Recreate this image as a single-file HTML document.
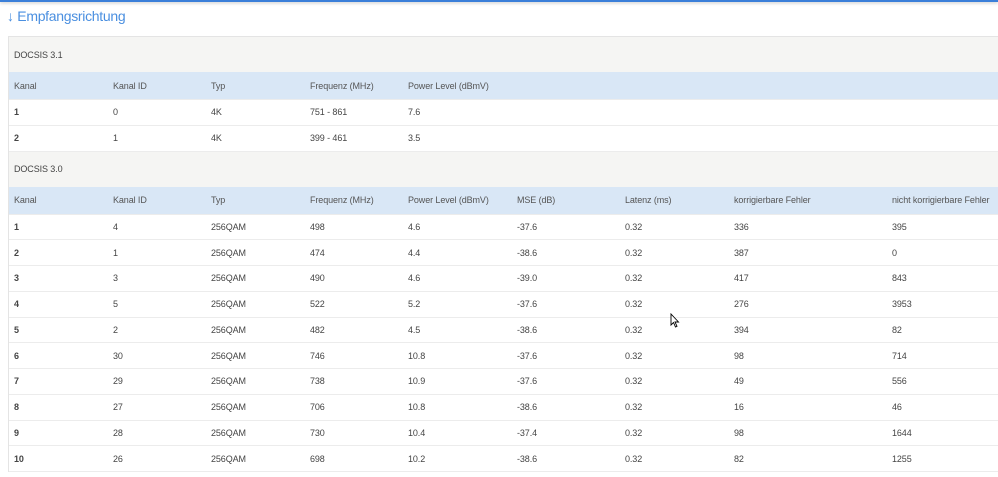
<!DOCTYPE html>
<html><head><style>
body{margin:0;width:998px;height:477px;overflow:hidden;background:#fff;font-family:"Liberation Sans",sans-serif;color:#444;position:relative}
.top{position:absolute;left:0;top:0;width:998px;height:2px;background:#3b7fd9;box-shadow:0 1px 3px rgba(0,0,0,.25)}
.title{position:absolute;left:7px;top:8px;font-size:14px;color:#4a8fe0;letter-spacing:-0.3px}
.wrap{position:absolute;left:8px;top:36px;width:990px;border-left:1px solid #e4e4e4;border-top:1px solid #e4e4e4}
.row{position:relative;height:25.75px;border-bottom:1px solid #ececec;font-size:9px;box-sizing:border-box;letter-spacing:-0.1px}
.row span{position:absolute;top:50%;transform:translateY(-50%)}
.grp{background:#f5f5f3;height:35px;border-bottom:none}
.hd{background:#d9e7f6;height:28px;color:#555}
.b{font-weight:bold;color:#444}
</style></head><body>
<div class="top"></div>
<div class="title">↓ Empfangsrichtung</div>
<div class="wrap">
<div class="row grp"><span style="left:5px">DOCSIS 3.1</span></div>
<div class="row hd"><span style="left:5px">Kanal</span><span style="left:104px">Kanal ID</span><span style="left:202px">Typ</span><span style="left:301px">Frequenz (MHz)</span><span style="left:399px">Power Level (dBmV)</span></div>
<div class="row"><span style="left:5px" class="b">1</span><span style="left:104px">0</span><span style="left:202px">4K</span><span style="left:301px">751 - 861</span><span style="left:399px">7.6</span></div>
<div class="row"><span style="left:5px" class="b">2</span><span style="left:104px">1</span><span style="left:202px">4K</span><span style="left:301px">399 - 461</span><span style="left:399px">3.5</span></div>
<div class="row grp"><span style="left:5px">DOCSIS 3.0</span></div>
<div class="row hd"><span style="left:5px">Kanal</span><span style="left:104px">Kanal ID</span><span style="left:202px">Typ</span><span style="left:301px">Frequenz (MHz)</span><span style="left:399px">Power Level (dBmV)</span><span style="left:508px">MSE (dB)</span><span style="left:616px">Latenz (ms)</span><span style="left:725px">korrigierbare Fehler</span><span style="left:883px">nicht korrigierbare Fehler</span></div>
<div class="row"><span style="left:5px" class="b">1</span><span style="left:104px">4</span><span style="left:202px">256QAM</span><span style="left:301px">498</span><span style="left:399px">4.6</span><span style="left:508px">-37.6</span><span style="left:616px">0.32</span><span style="left:725px">336</span><span style="left:883px">395</span></div>
<div class="row"><span style="left:5px" class="b">2</span><span style="left:104px">1</span><span style="left:202px">256QAM</span><span style="left:301px">474</span><span style="left:399px">4.4</span><span style="left:508px">-38.6</span><span style="left:616px">0.32</span><span style="left:725px">387</span><span style="left:883px">0</span></div>
<div class="row"><span style="left:5px" class="b">3</span><span style="left:104px">3</span><span style="left:202px">256QAM</span><span style="left:301px">490</span><span style="left:399px">4.6</span><span style="left:508px">-39.0</span><span style="left:616px">0.32</span><span style="left:725px">417</span><span style="left:883px">843</span></div>
<div class="row"><span style="left:5px" class="b">4</span><span style="left:104px">5</span><span style="left:202px">256QAM</span><span style="left:301px">522</span><span style="left:399px">5.2</span><span style="left:508px">-37.6</span><span style="left:616px">0.32</span><span style="left:725px">276</span><span style="left:883px">3953</span></div>
<div class="row"><span style="left:5px" class="b">5</span><span style="left:104px">2</span><span style="left:202px">256QAM</span><span style="left:301px">482</span><span style="left:399px">4.5</span><span style="left:508px">-38.6</span><span style="left:616px">0.32</span><span style="left:725px">394</span><span style="left:883px">82</span></div>
<div class="row"><span style="left:5px" class="b">6</span><span style="left:104px">30</span><span style="left:202px">256QAM</span><span style="left:301px">746</span><span style="left:399px">10.8</span><span style="left:508px">-37.6</span><span style="left:616px">0.32</span><span style="left:725px">98</span><span style="left:883px">714</span></div>
<div class="row"><span style="left:5px" class="b">7</span><span style="left:104px">29</span><span style="left:202px">256QAM</span><span style="left:301px">738</span><span style="left:399px">10.9</span><span style="left:508px">-37.6</span><span style="left:616px">0.32</span><span style="left:725px">49</span><span style="left:883px">556</span></div>
<div class="row"><span style="left:5px" class="b">8</span><span style="left:104px">27</span><span style="left:202px">256QAM</span><span style="left:301px">706</span><span style="left:399px">10.8</span><span style="left:508px">-38.6</span><span style="left:616px">0.32</span><span style="left:725px">16</span><span style="left:883px">46</span></div>
<div class="row"><span style="left:5px" class="b">9</span><span style="left:104px">28</span><span style="left:202px">256QAM</span><span style="left:301px">730</span><span style="left:399px">10.4</span><span style="left:508px">-37.4</span><span style="left:616px">0.32</span><span style="left:725px">98</span><span style="left:883px">1644</span></div>
<div class="row"><span style="left:5px" class="b">10</span><span style="left:104px">26</span><span style="left:202px">256QAM</span><span style="left:301px">698</span><span style="left:399px">10.2</span><span style="left:508px">-38.6</span><span style="left:616px">0.32</span><span style="left:725px">82</span><span style="left:883px">1255</span></div>
</div>
<svg style="position:absolute;left:670px;top:313px" width="10" height="15" viewBox="0 0 10 15"><path d="M1 1 L1 12 L3.5 9.5 L5.5 14 L7 13.3 L5 9 L8.5 9 Z" fill="#fff" stroke="#000" stroke-width="0.9"/></svg>
</body></html>
